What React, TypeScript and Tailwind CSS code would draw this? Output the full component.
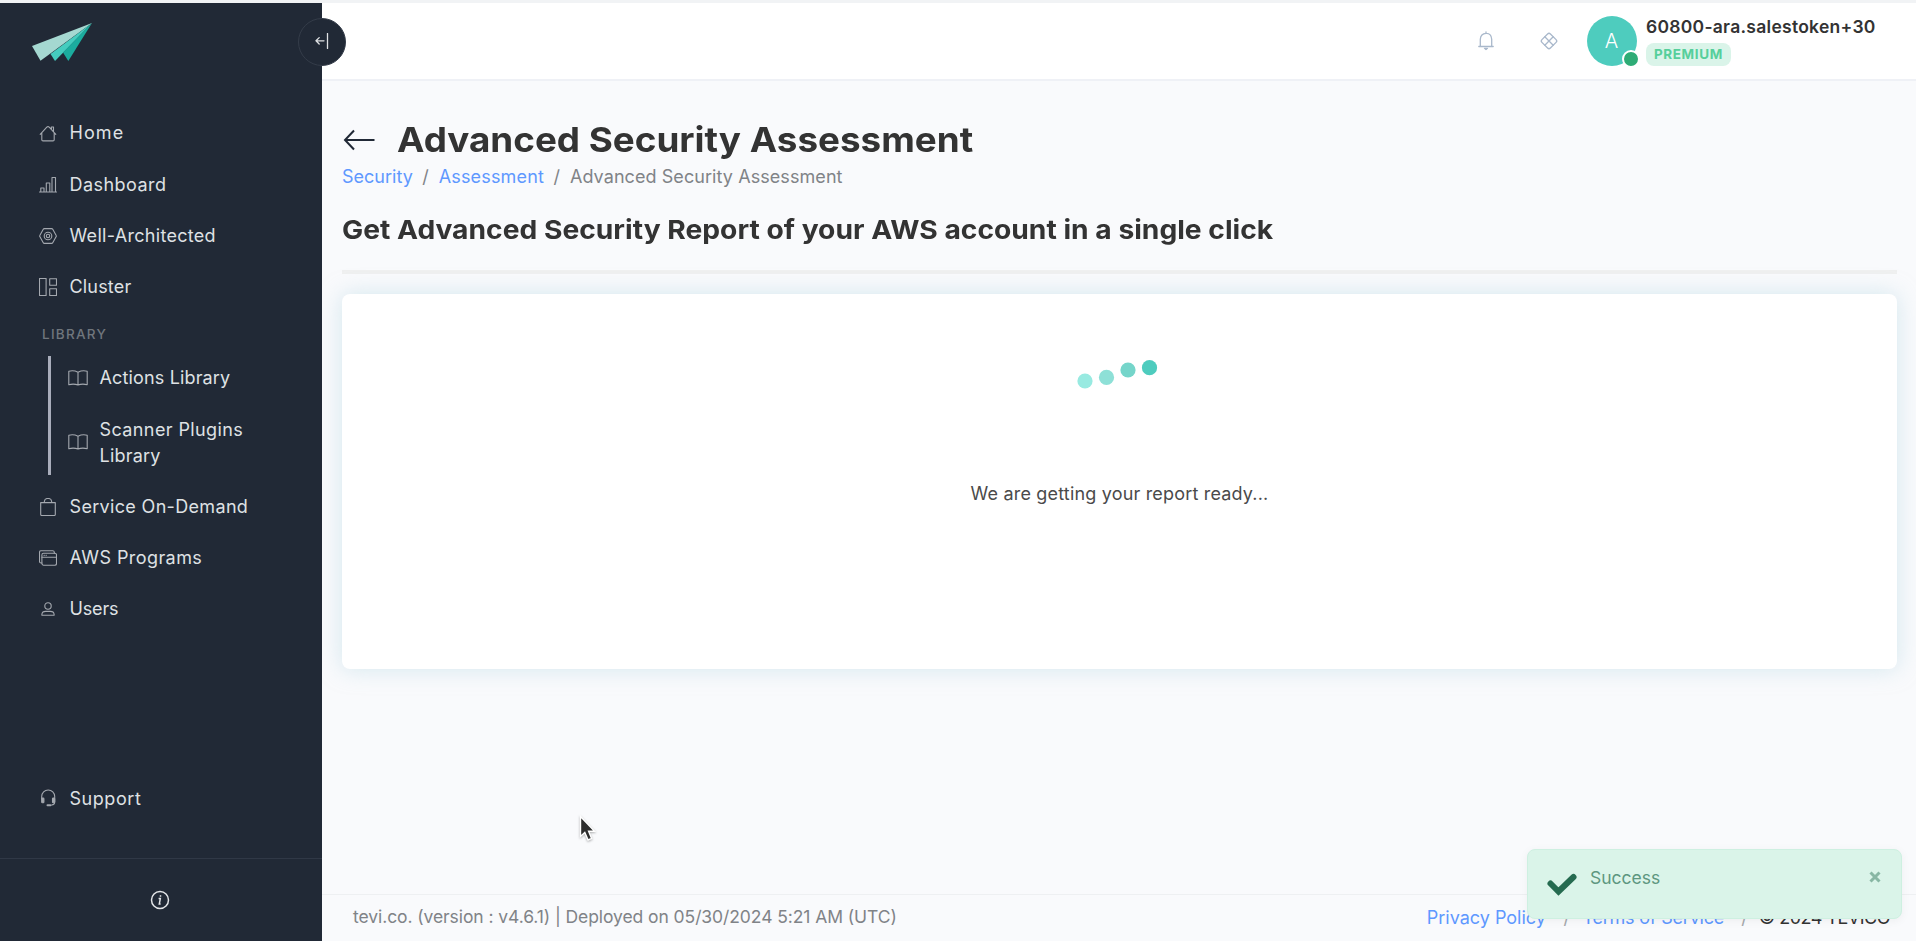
import type { ReactNode } from "react";

const svgProps = {
  fill: "none",
  stroke: "currentColor",
  strokeWidth: 1.1,
  strokeLinecap: "round" as const,
  strokeLinejoin: "round" as const,
};

function HomeIcon() {
  return (
    <svg width="18" height="18" viewBox="0 0 18 18" {...svgProps}>
      <path d="M1.2 9.3 7.8 2.2q1.2-1.1 2.4 0l6.6 7.1M2.8 7.8v6.9q0 1.2 1.2 1.2h10q1.2 0 1.2-1.2V7.8M12.3 4V2h2.2v4.6" />
    </svg>
  );
}

function BarsIcon() {
  return (
    <svg width="18" height="18" viewBox="0 0 18 18" {...svgProps}>
      <path d="M.5 16h17M1.800 15.500V12H5v3.500M7.300 15.500V7h3.500v8.500M13 15.500v-14h3.500v14" />
    </svg>
  );
}

function HexIcon() {
  return (
    <svg width="18" height="18" viewBox="0 0 18 18" {...svgProps}>
      <path d="M5.3 1.6h7.4q.6 0 .9.5l3.6 6.4q.3.5 0 1l-3.6 6.4q-.3.5-.9.5H5.3q-.6 0-.9-.5L.8 9.5q-.3-.5 0-1l3.6-6.4q.3-.5.9-.5Z" />
      <circle cx="9" cy="9" r="3.8" />
      <circle cx="9" cy="9" r="1.700" />
    </svg>
  );
}

function ClusterIcon() {
  return (
    <svg width="18" height="18" viewBox="0 0 18 18" {...svgProps}>
      <rect x=".5" y=".5" width="6.6" height="17" />
      <rect x="10.7" y=".8" width="6.8" height="6.4" />
      <rect x="10.7" y="10.8" width="6.8" height="6.7" />
    </svg>
  );
}

function BookIcon() {
  return (
    <svg className="shrink-0" width="20" height="18" viewBox="0 0 20 18" {...svgProps}>
      <path d="M10 3.200Q5.500 1 .8 2.300v13.400q4.700-1.200 9.200.2 4.500-1.400 9.200-.2V2.300Q14.500 1 10 3.200ZM10 3.200v12.700" />
    </svg>
  );
}

function BagIcon() {
  return (
    <svg width="18" height="18" viewBox="0 0 18 18" {...svgProps}>
      <path d="M1.700 4.600h14.600v11.900q0 1-1 1H2.700q-1 0-1-1ZM5.400 4.400V3.200Q5.800.6 8.200.5h1.600q2.400.1 2.800 2.700v1.200" />
    </svg>
  );
}

function WindowsIcon() {
  return (
    <svg width="18" height="18" viewBox="0 0 18 18" {...svgProps}>
      <rect x="2.900" y="4.300" width="14.600" height="11.900" rx="1.600" />
      <path d="M2.900 8.300h14.600M2.900 14H2Q.5 14 .5 12.500V3.200Q.5 1.800 2 1.800h11.800q1.300 0 1.500 1.200v1.200M5 6.300h.4M7 6.300h.4" />
    </svg>
  );
}

function UserIcon() {
  return (
    <svg width="18" height="18" viewBox="0 0 18 18" {...svgProps}>
      <circle cx="9" cy="6" r="3.200" />
      <path d="M2.900 15.300v-1q.3-2.900 3.800-2.900h4.600q3.500 0 3.800 2.900v1Z" />
    </svg>
  );
}

function SupportIcon() {
  return (
    <svg width="18" height="18" viewBox="0 0 18 18" {...svgProps}>
      <path d="M2.700 10V7.500a6.500 6.500 0 0 1 13 0V13q0 2.800-3 3" />
      <rect x="2.700" y="9" width="2.200" height="4.800" rx=".8" fill="currentColor" />
      <rect x="13.500" y="9" width="2.200" height="4.800" rx=".8" fill="currentColor" />
      <path d="M8.500 16.300h3" strokeWidth="2" />
    </svg>
  );
}

function NavItem({ icon, className, children }: { icon: ReactNode; className: string; children: ReactNode }) {
  return (
    <a className="flex h-[51.200px] items-center text-[#dfe1e4]">
      <span className="mr-[12.500px] flex w-[18px] shrink-0 justify-center text-[#a4a8af]">{icon}</span>
      <span className={`whitespace-nowrap ${className}`}>{children}</span>
    </a>
  );
}

function Sidebar() {
  return (
    <aside className="relative z-10 flex w-[322px] shrink-0 flex-col bg-[#212936] text-[18px] leading-[26.200px]">
      <svg className="mt-5 ml-8" width="60" height="38" viewBox="0 0 60 38">
        <path d="M0 23 60 0 8.500 37.800Z" fill="#a5d8d1" />
        <path d="M60 0 18.500 31 23 38Z" fill="#45ccbe" />
        <path d="M60 0 31 29.500 36.300 38Z" fill="#1bac9e" />
      </svg>
      <button className="absolute top-[15px] left-[298px] flex size-12 items-center justify-center rounded-full border border-[#343c49] bg-[#212936] pb-[2px] text-[#dfe1e4]">
        <svg width="14" height="16" viewBox="0 0 14 16" {...svgProps} strokeWidth="1.300">
          <path d="M12.500.5v15M9 7.800H1.200M4.200 4.600 1 7.800l3.200 3.200" />
        </svg>
      </button>
      <nav className="mt-[47px] flex flex-col pl-[39px]">
        <NavItem icon={<HomeIcon />} className="tracking-[1.100px]">Home</NavItem>
        <NavItem icon={<BarsIcon />} className="tracking-[0.450px]">Dashboard</NavItem>
        <NavItem icon={<HexIcon />} className="tracking-[0.300px]">Well-Architected</NavItem>
        <NavItem icon={<ClusterIcon />} className="tracking-[0.170px]">Cluster</NavItem>
        <div className="flex h-10 items-center pt-[3px] pl-[3px] text-[13.500px] font-medium tracking-[1.250px] text-[#70767d]">
          LIBRARY
        </div>
        <div className="flex">
          <div className="mt-[3px] mb-[6px] ml-[9px] w-[3px] bg-[#a9adbb]" />
          <div className="pl-[18px]">
            <NavItem icon={<BookIcon />} className="tracking-[0.150px]">Actions Library</NavItem>
            <a className="flex h-[77px] items-center text-[#dfe1e4]">
              <span className="mr-[12.500px] flex w-[18px] shrink-0 justify-center text-[#a4a8af]"><BookIcon /></span>
              <span className="flex flex-col pt-px whitespace-nowrap">
                <span className="tracking-[0.400px]">Scanner Plugins</span>
                <span className="tracking-[0.200px]">Library</span>
              </span>
            </a>
          </div>
        </div>
        <NavItem icon={<BagIcon />} className="pt-px tracking-[0.330px]">Service On-Demand</NavItem>
        <NavItem icon={<WindowsIcon />} className="pt-px tracking-[0.420px]">AWS Programs</NavItem>
        <NavItem icon={<UserIcon />} className="pt-px tracking-[-0.150px]">Users</NavItem>
      </nav>
      <div className="mt-auto pb-[34px] pl-[39px]">
        <NavItem icon={<SupportIcon />} className="pt-px tracking-[0.550px]">Support</NavItem>
      </div>
      <div className="flex h-[83px] items-center justify-center border-t border-[#303846] pr-[3px] text-[#e3e5e8]">
        <svg width="20" height="20" viewBox="0 0 20 20" fill="none" stroke="currentColor" strokeWidth="1.500">
          <circle cx="10" cy="10" r="8.500" />
          <path d="M8.600 8.600h1.700L9.300 14h1.300M10.500 5.200v1.500" />
        </svg>
      </div>
    </aside>
  );
}

function Header() {
  return (
    <header className="flex h-[78px] shrink-0 items-start border-b-2 border-[#eff1f6] bg-white">
      <svg className="mt-[28px] ml-auto text-[#a9b8cb]" width="18" height="20" viewBox="0 0 18 20" {...svgProps} strokeWidth="1.300">
        <path d="M1.800 15.500h14.400M3.300 15.500V8.200Q3.700 2.600 9 2.300t5.700 5.900v7.300M9 2.300V1" />
        <path d="M7.500 17.300h3L9 18.500Z" fill="currentColor" />
      </svg>
      <svg className="mt-[28px] ml-[43.500px] text-[#a9b8cb]" width="20" height="20" viewBox="0 0 20 20" {...svgProps} strokeWidth="1.300">
        <rect x="4" y="4" width="12" height="12" rx="2" transform="rotate(45 10 10)" />
        <path d="m5.800 5.800 8.400 8.400M14.200 5.800l-8.400 8.400" />
      </svg>
      <div className="relative mt-[12.500px] ml-[28px] flex size-[50px] items-center justify-center rounded-full bg-[#4eccbe] text-[20px] font-light text-white">
        A
        <span className="absolute top-[34px] left-[35px] size-[18px] rounded-full border-2 border-white bg-[#2eac76]" />
      </div>
      <div className="mt-[11px] mr-[41px] ml-[9.500px] flex w-[229px] flex-col items-start whitespace-nowrap">
        <span className="text-[17.500px] leading-[26px] font-semibold tracking-[0.270px] text-[#333]">60800-ara.salestoken+30</span>
        <span className="mt-[3px] flex h-[23px] w-[84.500px] items-center rounded-lg bg-[#daf4e9] pb-px pl-[8px] text-[13.500px] font-bold tracking-[0.600px] text-[#56cf9b]">
          PREMIUM
        </span>
      </div>
    </header>
  );
}

function Toast() {
  return (
    <div className="absolute top-[849px] left-[1527px] flex h-[70px] w-[375px] rounded-lg border border-[#cef0e1] bg-[#daf4e9] text-[17.500px] leading-[26px] shadow-[0_2px_10px_rgba(0,0,0,0.05)]">
      <svg className="mt-[22px] ml-[18px]" width="32" height="26" viewBox="0 0 32 26" fill="none" stroke="#256b50" strokeWidth="6">
        <path d="m4.500 11.500 8 8L27.500 5" strokeLinecap="round" />
      </svg>
      <span className="mt-[15px] ml-[12px] text-[#5d9780]">Success</span>
      <svg className="mt-[21px] mr-[20px] ml-auto" width="12" height="12" viewBox="0 0 12 12" stroke="#88b7a4" strokeWidth="3">
        <path d="m1.500 1.500 9 9m0-9-9 9" />
      </svg>
    </div>
  );
}

function Pointer() {
  return (
    <svg className="absolute top-[814px] left-[577px] drop-shadow-[0_1px_1px_rgba(0,0,0,0.3)]" width="20" height="28" viewBox="0 0 20 28">
      <path d="M3.500 2.500v20l4.300-4 3.300 7.500 3.500-1.500-3-7.200h6Z" fill="#2d2d2d" stroke="#fff" strokeWidth="1.400" />
    </svg>
  );
}

export default function App() {
  return (
    <div className="relative flex h-[941px] w-[1916px] flex-col overflow-hidden bg-[#f9fafc] font-['Inter','Noto_Sans',sans-serif]">
      <div className="h-[3px] shrink-0 bg-[#f1f3f5]" />
      <div className="flex min-h-0 flex-1">
        <Sidebar />
        <div className="flex min-w-0 flex-1 flex-col">
          <Header />
          <main className="flex-1 pt-[37px] pr-[19px] pl-[20px] text-[#333]">
            <div className="flex h-[44px] items-center">
              <svg width="34" height="28" viewBox="0 0 34 28" fill="none" stroke="#212936" strokeWidth="2">
                <path d="M12 4.500 3 14l9 9.500M3 14h29.500" />
              </svg>
              <h1 className="ml-[20.500px] origin-left scale-x-[1.067] text-[34.500px] leading-[44px] font-bold whitespace-nowrap">
                Advanced Security Assessment
              </h1>
            </div>
            <div className="mt-[2px] flex h-[26px] items-center text-[18px] leading-[26px] whitespace-nowrap text-[#808387]">
              <a className="text-[#5e98ff]">Security</a>
              <span className="mr-[10px] ml-[9.500px]">/</span>
              <a className="tracking-[0.150px] text-[#5e98ff]">Assessment</a>
              <span className="mr-[10px] ml-[9.500px]">/</span>
              <span className="tracking-[0.070px]">Advanced Security Assessment</span>
            </div>
            <h2 className="mt-[22px] w-max origin-left scale-x-[1.085] text-[26px] leading-[35px] font-bold whitespace-nowrap">
              Get Advanced Security Report of your AWS account in a single click
            </h2>
            <hr className="mt-[23px] border-t-4 border-[#eff0f0]" />
            <section className="mt-[19.500px] flex h-[375px] flex-col items-center rounded-lg bg-white shadow-[0_0_22px_rgba(176,214,228,0.500)]">
              <svg className="mt-[60px]" width="90" height="40" viewBox="0 0 90 40">
                <circle cx="10" cy="27" r="7.600" fill="#98eae1" />
                <circle cx="31.500" cy="23.400" r="7.600" fill="#8ee0d7" />
                <circle cx="53" cy="16" r="7.600" fill="#75d5ca" />
                <circle cx="74.500" cy="13.700" r="7.600" fill="#4eccbe" />
              </svg>
              <p className="mt-[87px] text-[18px] leading-[26px] tracking-[0.180px] text-[#4a4a4a]">We are getting your report ready...</p>
            </section>
          </main>
          <footer className="flex h-[47px] shrink-0 items-center justify-between border-t border-[#eef0f2] pr-[26px] pb-[2px] pl-[31px] text-[17.500px] whitespace-nowrap text-[#808387]">
            <span className="tracking-[-0.080px]">tevi.co. (version : v4.6.1) | Deployed on 05/30/2024 5:21 AM (UTC)</span>
            <div className="flex text-[18px]">
              <a className="text-[#5e98ff]">Privacy Policy</a>
              <span className="mr-[12.500px] ml-[17.500px] text-[#a5a8ac]">/</span>
              <a className="tracking-[-0.200px] text-[#5e98ff]">Terms of Service</a>
              <span className="mr-[11px] ml-[17px] text-[#a5a8ac]">/</span>
              <span className="tracking-[-0.500px] text-[#333]">© 2024 TEVICO</span>
            </div>
          </footer>
        </div>
      </div>
      <Toast />
      <Pointer />
    </div>
  );
}
